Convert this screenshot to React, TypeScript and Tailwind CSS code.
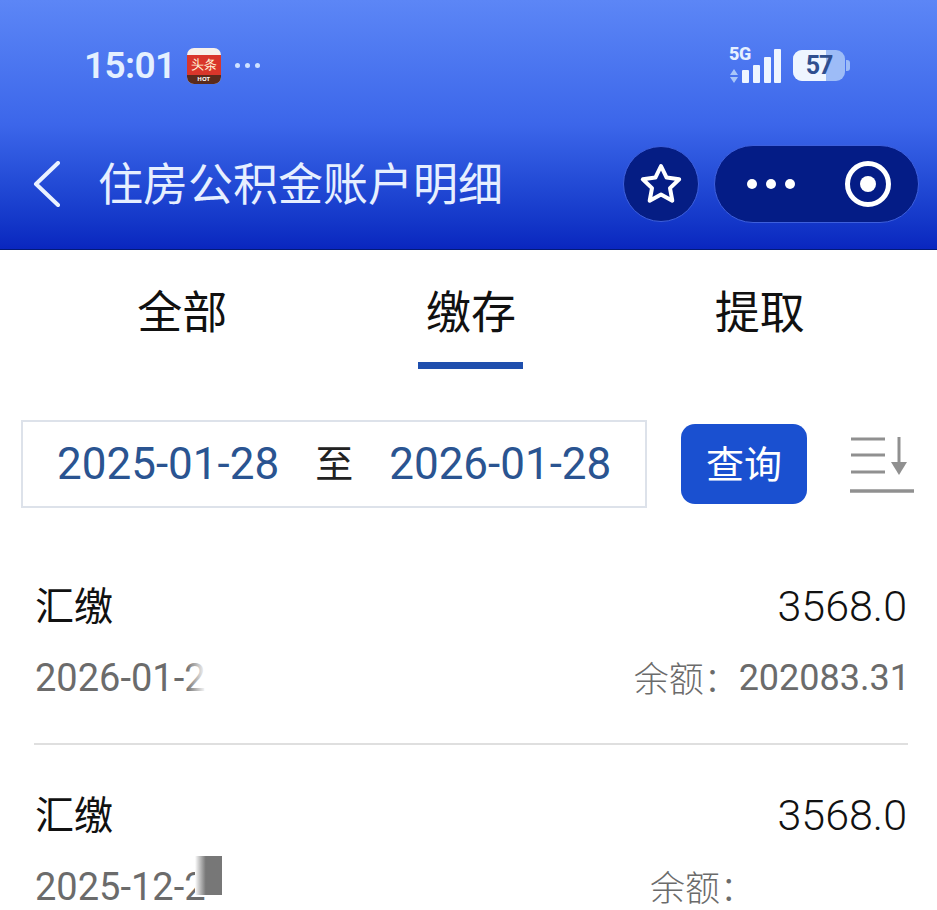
const cjk = "font-['Noto_Sans_CJK_SC','Noto_Sans',sans-serif]";

function StatusBar() {
  return (
    <div className="flex h-[65px] items-center justify-between pl-[84px] pr-[87px] text-[#e4f0ff]">
      <div className="flex items-center">
        <span className="font-['Roboto',sans-serif] text-[37px] font-semibold leading-none tracking-[-0.6px]">15:01</span>
        <div className="ml-[11px] flex h-[36px] w-[34px] flex-col overflow-hidden rounded-[7px] bg-[#f7f1ea]">
          <div className="mt-[7px] flex h-[20px] items-center justify-center bg-[#d9362b] text-[13px] font-medium leading-none text-[#fff3d6]">头条</div>
          <div className="flex flex-1 items-center justify-center bg-[#5a2a1c] text-[6px] font-bold leading-none text-white">HOT</div>
        </div>
        <div className="ml-[14px] flex gap-[5px]">
          <span className="size-[5px] rounded-full bg-[#cfe2ff]" />
          <span className="size-[5px] rounded-full bg-[#cfe2ff]" />
          <span className="size-[5px] rounded-full bg-[#cfe2ff]" />
        </div>
      </div>
      <div className="flex items-center">
        <div className="relative h-[36px] w-[52px]">
          <svg width="52" height="36" viewBox="0 0 52 36">
            <path d="M5 21l4 6H1zM5 35l4-6H1z" fill="#a9c6f8" />
            <rect x="13" y="22" width="7" height="13" rx="1" fill="#eef5ff" />
            <rect x="24" y="17" width="7" height="18" rx="1" fill="#eef5ff" />
            <rect x="35" y="9" width="7" height="26" rx="1" fill="#eef5ff" />
            <rect x="45" y="1" width="7" height="34" rx="1" fill="#eef5ff" />
          </svg>
          <span className="absolute left-0 top-[-3px] font-['Roboto',sans-serif] text-[18px] font-extrabold leading-[18px] tracking-[-0.5px] text-[#e6f0ff]">5G</span>
        </div>
        <div className="relative ml-[12px] flex h-[31px] w-[52px] overflow-hidden rounded-[9px] bg-[#9dbcf7]">
          <div className="h-full w-[33px] bg-[#eef5ff]" />
          <span className="absolute inset-0 flex items-center justify-center font-['Roboto',sans-serif] text-[25px] font-bold leading-none tracking-[-1px] text-[#2f4f8f]">57</span>
        </div>
        <div className="ml-[1px] h-[11px] w-[4px] rounded-r-[3px] bg-[#9dbcf7]" />
      </div>
    </div>
  );
}

function NavBar() {
  return (
    <div className="mt-[47px] flex h-[78px] items-center justify-between pl-[33px] pr-[18px]">
      <div className="flex items-center">
        <svg width="28" height="46" viewBox="0 0 28 46" fill="none" stroke="#eaf2ff" strokeWidth="4" strokeLinecap="round" strokeLinejoin="round">
          <path d="M25 2 3 23l22 21" />
        </svg>
        <span className={`${cjk} ml-[37px] pb-[6px] text-[45px] leading-none text-[#e6efff]`}>住房公积金账户明细</span>
      </div>
      <div className="flex items-center gap-[15px]">
        <div className="flex size-[76px] items-center justify-center rounded-full border border-[#3d5fdc] bg-[#051d84]">
          <svg width="44" height="44" viewBox="0 0 44 44" fill="none" stroke="white" strokeWidth="4" strokeLinejoin="round">
            <path d="M22 4l5.6 11.6 12.6 1.7-9.2 8.8 2.3 12.6L22 32.6l-11.3 6.1L13 26.1 3.8 17.3l12.6-1.7z" />
          </svg>
        </div>
        <div className="flex h-[78px] w-[205px] items-center rounded-full border border-[#3d5fdc] bg-[#041c86] pl-[32px]">
          <div className="flex gap-[9px]">
            <span className="size-[10px] rounded-full bg-white" />
            <span className="size-[10px] rounded-full bg-white" />
            <span className="size-[10px] rounded-full bg-white" />
          </div>
          <div className="ml-[50px] flex size-[46px] items-center justify-center rounded-full border-[5px] border-white">
            <span className="size-[16px] rounded-full bg-white" />
          </div>
        </div>
      </div>
    </div>
  );
}

function Tabs() {
  const tabs = ["全部", "缴存", "提取"];
  return (
    <div className="grid h-[119px] grid-cols-3 pl-[38px] pr-[33px]">
      {tabs.map((t, i) => (
        <div key={t} className="flex flex-col items-center">
          <span className={`${cjk} mt-[35px] text-[45px] leading-[50px] text-[#111]`}>{t}</span>
          {i === 1 && <span className="mt-[27px] h-[7px] w-[105px] bg-[#1f4fae]" />}
        </div>
      ))}
    </div>
  );
}

function SortIcon() {
  return (
    <svg width="64" height="60" viewBox="0 0 64 60" fill="none" stroke="#909090" strokeWidth="3">
      <path d="M1 5h34M1 21h34M1 38h34" />
      <path d="M0 57h64" strokeWidth="3.5" />
      <path d="M49 3v30" />
      <path d="M41 28h16l-8 13z" fill="#909090" stroke="none" />
    </svg>
  );
}

function Filter() {
  const dateCls = "font-['Roboto',sans-serif] text-[44px] leading-none text-[#2a5491]";
  return (
    <div className="mt-[51px] flex h-[88px] items-center pl-[21px]">
      <div className="flex h-[88px] w-[626px] items-center border-2 border-[#dde2ea] pl-[34px]">
        <span className={dateCls}>2025-01-28</span>
        <span className={`${cjk} ml-[36px] pb-[6px] text-[38px] leading-none text-[#222]`}>至</span>
        <span className={`${dateCls} ml-[36px]`}>2026-01-28</span>
      </div>
      <button className={`${cjk} ml-[34px] flex h-[80px] w-[126px] items-center justify-center rounded-[14px] bg-[#1a50d0] pb-[6px] text-[38px] text-white`}>查询</button>
      <div className="ml-[43px]"><SortIcon /></div>
    </div>
  );
}

function Record({ date, balance, mask }: { date: string; balance?: string; mask: "fade" | "block" }) {
  return (
    <div className="pl-[35px] pr-[30px]">
      <div className="flex h-[50px] items-center justify-between">
        <span className={`${cjk} pb-[6px] text-[39px] leading-none text-[#111]`}>汇缴</span>
        <span className="font-['Roboto',sans-serif] text-[43px] font-[350] leading-none text-[#111]">3568.0</span>
      </div>
      <div className="mt-[27px] flex h-[40px] items-center justify-between text-[#6b6b6b]">
        <div className="relative">
          <span className="font-['Roboto',sans-serif] text-[38px] leading-none">{date}</span>
          {mask === "fade" && <span className="absolute right-0 top-0 h-full w-[20px] bg-gradient-to-r from-white/0 to-white" />}
          {mask === "block" && <span className="absolute left-[160px] top-[-12px] h-[39px] w-[27px] bg-gradient-to-r from-white from-0% via-[#777] via-40% to-[#777]" />}
        </div>
        <div className="mr-[-3px] flex items-center">
          <span className={`${cjk} pb-[4px] text-[35px] font-light leading-none`}>余额：</span>
          {balance ? (
            <span className="font-['Roboto',sans-serif] text-[36px] leading-none">{balance}</span>
          ) : (
            <span className="w-[155px]" />
          )}
        </div>
      </div>
    </div>
  );
}

export default function App() {
  return (
    <div className="h-[910px] w-[937px] overflow-hidden bg-white">
      <header className="h-[250px] border-b border-[#031a78] bg-gradient-to-b from-[#5c86f6] via-[#3c66ea] to-[#0a26bf] pt-[33px]">
        <StatusBar />
        <NavBar />
      </header>
      <Tabs />
      <Filter />
      <div className="mt-[73px]">
        <Record date="2026-01-2" balance="202083.31" mask="fade" />
        <div className="ml-[34px] mr-[29px] mt-[45px] h-[2px] bg-[#dfdfdf]" />
        <div className="mt-[45px]">
          <Record date="2025-12-2" mask="block" />
        </div>
      </div>
    </div>
  );
}
